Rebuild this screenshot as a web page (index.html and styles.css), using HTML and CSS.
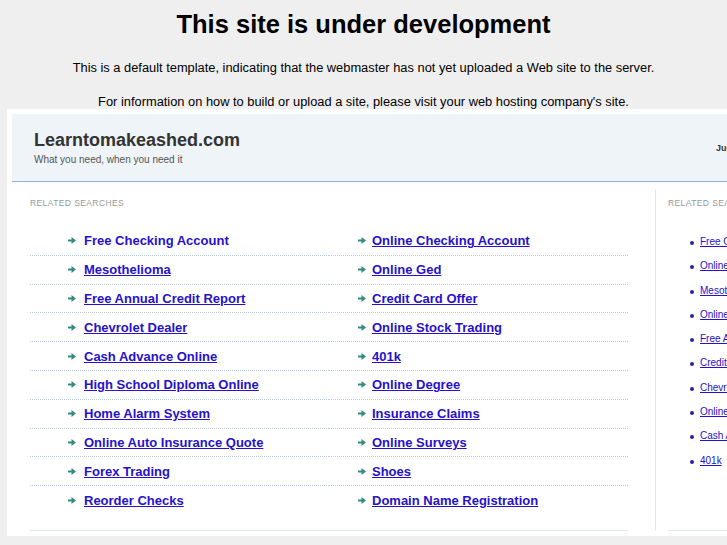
FILE: index.html
```html
<!DOCTYPE html>
<html lang="en">
<head>
    <meta charset="UTF-8">
    <title>This site is under development</title>
    <link rel="stylesheet" href="styles.css">
</head>
<body>
    <div class="notice">
        <h1>This site is under development</h1>
        <p>This is a default template, indicating that the webmaster has not yet uploaded a Web site to the server.</p>
        <p>For information on how to build or upload a site, please visit your web hosting company's site.</p>
    </div>

    <div class="frame">
        <div class="header">
            <div class="brand">
                <div class="title">Learntomakeashed.com</div>
                <div class="tagline">What you need, when you need it</div>
            </div>
            <div class="date">June 2011</div>
        </div>

        <div class="main">
            <div class="content">
                <div class="label">Related Searches</div>
                <ul class="links">
                    <li><a class="plain">Free Checking Account</a></li>
                    <li><a>Online Checking Account</a></li>
                    <li><a>Mesothelioma</a></li>
                    <li><a>Online Ged</a></li>
                    <li><a>Free Annual Credit Report</a></li>
                    <li><a>Credit Card Offer</a></li>
                    <li><a>Chevrolet Dealer</a></li>
                    <li><a>Online Stock Trading</a></li>
                    <li><a>Cash Advance Online</a></li>
                    <li><a>401k</a></li>
                    <li><a>High School Diploma Online</a></li>
                    <li><a>Online Degree</a></li>
                    <li><a>Home Alarm System</a></li>
                    <li><a>Insurance Claims</a></li>
                    <li><a>Online Auto Insurance Quote</a></li>
                    <li><a>Online Surveys</a></li>
                    <li><a>Forex Trading</a></li>
                    <li><a>Shoes</a></li>
                    <li><a>Reorder Checks</a></li>
                    <li><a>Domain Name Registration</a></li>
                </ul>
            </div>
            <div class="side">
                <div class="label">Related Searches</div>
                <ul class="small-links">
                    <li><a>Free Checking Account</a></li>
                    <li><a>Online Checking Account</a></li>
                    <li><a>Mesothelioma</a></li>
                    <li><a>Online Ged</a></li>
                    <li><a>Free Annual Credit Report</a></li>
                    <li><a>Credit Card Offer</a></li>
                    <li><a>Chevrolet Dealer</a></li>
                    <li><a>Online Stock Trading</a></li>
                    <li><a>Cash Advance Online</a></li>
                    <li><a>401k</a></li>
                </ul>
            </div>
        </div>
    </div>
</body>
</html>
```

FILE: styles.css
```css
*{
    margin: 0;
    padding: 0;
}
ul{
    list-style: none;
}
body{
    background: #efefef;
    font-family: "Liberation Sans", Arial, sans-serif;
    color: #000;
    overflow: hidden;
}
.notice{
    text-align: center;
    padding-top: 10px;
}
.notice h1{
    font-size: 25.5px;
    line-height: 28px;
    margin-bottom: 22px;
}
.notice p{
    font-size: 12.85px;
    line-height: 15px;
    margin-bottom: 19px;
}
.notice p:last-child{
    margin-bottom: 0;
}

.frame{
    margin: 0 0 0 7px;
    width: 760px;
    padding: 5px;
    background: #fff;
}
.header{
    display: flex;
    justify-content: space-between;
    align-items: center;
    height: 67px;
    padding-left: 22px;
    background: #eef4f7;
    border-bottom: 1px solid #8fb1e8;
}
.title{
    font-size: 18px;
    font-weight: bold;
    color: #333;
    line-height: 20px;
}
.tagline{
    font-size: 10px;
    color: #555;
    margin-top: 4px;
}
.date{
    width: 56px;
    font-size: 9px;
    font-weight: bold;
    color: #333;
    margin-top: 1px;
}

.main{
    display: flex;
    padding-top: 7px;
}
.content{
    width: 643px;
    padding: 9px 27px 0 18px;
    border-right: 1px solid #dbe6f6;
}
.label{
    font-size: 8.5px;
    color: #999;
    text-transform: uppercase;
    letter-spacing: 0.4px;
    line-height: 10px;
}
.links{
    display: grid;
    grid-template-columns: 299px 299px;
    margin-top: 19px;
    padding-bottom: 16px;
    border-bottom: 1px solid #dde9f6;
}
.links li{
    height: 27.8px;
    border-bottom: 1px dotted #b9cbe6;
    display: flex;
    align-items: center;
    padding-left: 38px;
}
.links li:nth-child(even){
    padding-left: 29px;
}
.links li:nth-last-child(-n+2){
    border-bottom: none;
}
.links li:before{
    content: "";
    width: 8px;
    height: 7px;
    margin-right: 8px;
    background: url("data:image/svg+xml,%3Csvg xmlns='http://www.w3.org/2000/svg' width='8' height='7' viewBox='0 0 8 7'%3E%3Cpath d='M0 2.5h3.5V0L8 3.5 3.5 7V4.5H0z' fill='%23318c82'/%3E%3C/svg%3E") no-repeat;
}
.links li:nth-child(even):before{
    margin-right: 6px;
}
.links a{
    font-size: 13px;
    font-weight: bold;
    color: #2611cc;
    text-decoration: underline;
}
.links a.plain{
    text-decoration: none;
}

.side{
    flex: 1;
    padding: 9px 0 0 12px;
}
.small-links{
    margin-top: 27px;
    padding-left: 22px;
    padding-bottom: 52px;
    border-bottom: 1px solid #dde9f6;
}
.small-links li{
    height: 24.3px;
    line-height: 14px;
    display: flex;
    align-items: flex-start;
}
.small-links li:before{
    content: "";
    width: 4px;
    height: 4px;
    border-radius: 2px;
    background: #2a1fa8;
    margin: 6px 6px 0 0;
}
.small-links a{
    font-size: 10px;
    color: #2611cc;
    text-decoration: underline;
    white-space: nowrap;
}
```
